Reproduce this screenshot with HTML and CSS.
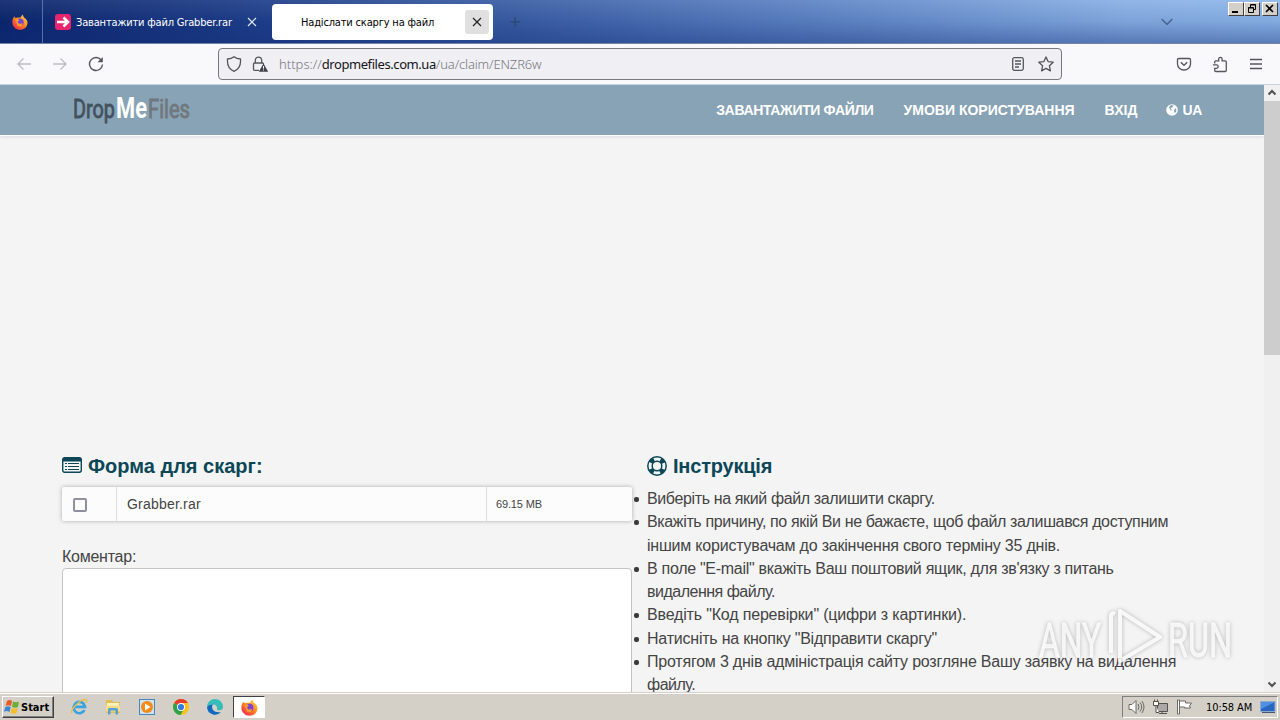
FILE: index.html
```html
<!DOCTYPE html>
<html lang="uk">
<head>
  <meta charset="UTF-8">
  <title>Надіслати скаргу на файл</title>
  <link rel="stylesheet" href="styles.css">
</head>
<body>
  <svg width="0" height="0" class="defs">
    <defs>
      <linearGradient id="fox" x1="1" y1="0" x2="0.2" y2="1">
        <stop offset="0" stop-color="#ffe14a"/>
        <stop offset="0.5" stop-color="#ff8a1f"/>
        <stop offset="1" stop-color="#f0264f"/>
      </linearGradient>
      <symbol id="firefox" viewBox="0 0 16 16">
        <path fill="url(#fox)" d="M1 4.500 2.200 2.500 3.500 4 6 3.500 8.500 3.500 10.500.5 12 3.500C14.500 5 15.800 7 15.500 9.500 15 13.300 12 15.800 8 15.800S.6 12.800.4 9C.3 7 .5 5.600 1 4.500z"/>
        <circle cx="8" cy="8.200" r="3.700" fill="#7a42d6"/>
        <path fill="#ff9a28" d="M3 5.500 6 5 7.200 6.300 5.500 8 7 9.800 10.500 9.500 9.500 12.500 5.500 12z"/>
      </symbol>
    </defs>
  </svg>

  <div class="tabbar">
    <div class="view-tab"><svg width="16" height="16"><use href="#firefox"/></svg></div>
    <div class="tab">
      <svg class="favicon" width="16" height="16" viewBox="0 0 16 16"><rect width="16" height="16" rx="3" fill="#e8246f"/><path d="M2 8h11M8.500 3.500 13 8l-4.500 4.500" fill="none" stroke="#fff" stroke-width="2.600"/></svg>
      <span class="tab-title t1">Завантажити файл Grabber.rar</span>
      <svg width="10" height="10" viewBox="0 0 10 10"><path d="M1 1l8 8M9 1 1 9" stroke="#dfe7f7" stroke-width="1.200"/></svg>
    </div>
    <div class="tab active">
      <span class="tab-title t2">Надіслати скаргу на файл</span>
      <span class="close-box"><svg width="10" height="10" viewBox="0 0 10 10"><path d="M1 1l8 8M9 1 1 9" stroke="#222" stroke-width="1.200"/></svg></span>
    </div>
    <svg class="plus" width="10" height="10" viewBox="0 0 10 10"><path d="M5 0v10M0 5h10" stroke="#2d4b70" stroke-width="1.300"/></svg>
    <svg class="chevron" width="12" height="8" viewBox="0 0 12 8"><path d="M.7 1 6 6.300 11.300 1" fill="none" stroke="#49668f" stroke-width="1.600"/></svg>
    <div class="win-buttons">
      <span class="win"><svg width="14" height="11"><path d="M3 9h6" stroke="#000" stroke-width="2"/></svg></span>
      <span class="win"><svg width="14" height="11" fill="none" stroke="#000"><path d="M5.500 5V1.500h5v5H9M5.500 2h5M3.500 4.500h5v5h-5zM3.500 5h5"/></svg></span>
      <span class="win last"><svg width="14" height="11"><path d="m3 2 7 7M10 2 3 9" stroke="#000" stroke-width="1.600"/></svg></span>
    </div>
  </div>

  <div class="toolbar">
    <div class="nav">
      <svg width="16" height="16" viewBox="0 0 16 16" fill="none" stroke="#bcbcc3" stroke-width="1.300"><path d="M15 8H2M7.500 2.500 2 8l5.500 5.500"/></svg>
      <svg width="16" height="16" viewBox="0 0 16 16" fill="none" stroke="#bcbcc3" stroke-width="1.300"><path d="M1 8h13M8.500 2.500 14 8l-5.500 5.500"/></svg>
      <svg width="16" height="16" viewBox="0 0 16 16"><path d="M13.500 4.500A6.500 6.500 0 1 0 14.500 8.500" fill="none" stroke="#55555e" stroke-width="1.400"/><path d="M14.800 1v5.300H9.500z" fill="#55555e"/></svg>
    </div>
    <div class="urlbar">
      <svg width="16" height="16" viewBox="0 0 16 16" fill="none" stroke="#55555e" stroke-width="1.300"><path d="M8 .8c2 1.600 4.200 2.100 6.500 2.200C15 9 12.800 13.500 8 15.300 3.200 13.500 1 9 1.500 3 3.800 2.900 6 2.400 8 .8z"/></svg>
      <svg class="lock" width="17" height="16" viewBox="0 0 17 16"><path d="M7 14.300H2.500q-1 0-1-1V8q0-1 1-1h8q1 0 1 1M3.300 7V4.300a3.200 3.200 0 0 1 6.400 0V7" fill="none" stroke="#55555e" stroke-width="1.300"/><path d="m11.500 7.500 4.700 8.200H6.800z" fill="#3f3f49"/><path d="M11.500 10v2.800M11.500 13.600v1" stroke="#fff" stroke-width="1.100"/></svg>
      <span class="url">https://<b>dropmefiles.com.ua</b><span class="path">/ua/claim/ENZR6w</span></span>
      <svg class="reader" width="14" height="16" viewBox="0 0 14 16" fill="none" stroke="#55555e" stroke-width="1.300"><rect x="1.700" y="1.700" width="10.600" height="12.600" rx="1.800"/><path d="M4 5h6M4 8h6M4 11h4"/></svg>
      <svg width="16" height="16" viewBox="0 0 16 16"><path d="m8 .9 2.100 4.700 5.100.6-3.800 3.500 1 5.200L8 12.400l-4.400 2.500 1-5.200L.8 6.200l5.100-.6z" fill="none" stroke="#55555e" stroke-width="1.300" stroke-linejoin="round"/></svg>
    </div>
    <div class="tools">
      <svg width="16" height="16" viewBox="0 0 16 16" fill="none" stroke="#55555e" stroke-width="1.300"><path d="M2.800 2.500h10.400q1.300 0 1.300 1.300V8a6.500 6 0 0 1-13 0V3.800q0-1.300 1.300-1.300z"/><path d="M4.800 6.300 8 9.300l3.200-3"/></svg>
      <svg width="16" height="17" viewBox="0 0 16 17" fill="none" stroke="#55555e" stroke-width="1.300"><path d="M2.700 7.500V5.800q0-1 1-1h3V3a1.700 1.700 0 0 1 3.400 0v1.800h3q1.200 0 1.200 1.200v8.300q0 1.200-1.200 1.200H3.900q-1.200 0-1.200-1.200v-2h1.800a1.500 1.500 0 0 0 0-3.400H1"/></svg>
      <svg class="burger" width="14" height="12" viewBox="0 0 14 12"><path d="M1 1.500h12M1 6h12M1 10.500h12" stroke="#55555e" stroke-width="1.300"/></svg>
    </div>
  </div>

  <div class="viewport">
    <div class="page">
      <header class="site-header">
        <svg class="logo" width="120" height="36" viewBox="0 0 120 36">
          <text x="1" y="26" font-size="25" fill="#43525f" stroke="#43525f" stroke-width=".8" textLength="42" lengthAdjust="spacingAndGlyphs">Drop</text>
          <text x="44" y="26" font-size="30" font-weight="bold" fill="#fff" textLength="31" lengthAdjust="spacingAndGlyphs">Me</text>
          <text x="76" y="26" font-size="25" fill="#71777c" stroke="#71777c" stroke-width=".8" textLength="42" lengthAdjust="spacingAndGlyphs">Files</text>
        </svg>
        <nav class="menu">
          <a class="m1">ЗАВАНТАЖИТИ ФАЙЛИ</a>
          <a class="m2">УМОВИ КОРИСТУВАННЯ</a>
          <a class="m3">ВХІД</a>
          <a class="m4"><svg width="12" height="12" viewBox="0 0 12 12"><circle cx="6" cy="6" r="5.800" fill="#fff"/><path d="m5 1 2.500.5L6 3.500l-1.500.7L6 6 4.500 6.500 3 3zM9 4l1.500 1.500L10 8 8.500 9 8 7z" fill="#87a3b5"/></svg> UA</a>
        </nav>
      </header>

      <main class="content">
        <section class="form">
          <h2>
            <svg class="list-icon" width="20" height="16" viewBox="0 0 20 16"><rect x=".7" y=".7" width="18.600" height="14.600" rx="2" fill="none" stroke="#0b4757" stroke-width="1.400"/><path d="M1 1h18v3.500H1z" fill="#0b4757"/><path d="M3 6.500h2M6 6.500h11M3 9.500h2M6 9.500h11M3 12.500h2M6 12.500h11" stroke="#0b4757"/></svg>
            <span>Форма для скарг:</span>
          </h2>
          <div class="file-row">
            <div class="cell-check"><span class="checkbox"></span></div>
            <div class="cell-name">Grabber.rar</div>
            <div class="cell-size">69.15 MB</div>
          </div>
          <div class="label">Коментар:</div>
          <div class="comment"></div>
        </section>
        <section class="help">
          <h2>
            <svg width="20" height="20" viewBox="0 0 20 20" fill="none" stroke="#0b4757"><circle cx="10" cy="10" r="9.200" stroke-width="1.500"/><circle cx="10" cy="10" r="4.800" stroke-width="1.500"/><circle cx="10" cy="10" r="7" stroke-width="4.200" stroke-dasharray="4.500 6.500" stroke-dashoffset="-3.250"/></svg>
            <span class="h-help">Інструкція</span>
          </h2>
          <ul>
            <li><span class="l1">Виберіть на який файл залишити скаргу.</span></li>
            <li><span class="l2">Вкажіть причину, по якій Ви не бажаєте, щоб файл залишався доступним</span><br><span class="l3">іншим користувачам до закінчення свого терміну 35 днів.</span></li>
            <li><span class="l4">В поле "E-mail" вкажіть Ваш поштовий ящик, для зв'язку з питань</span><br><span class="l5">видалення файлу.</span></li>
            <li><span class="l6">Введіть "Код перевірки" (цифри з картинки).</span></li>
            <li><span class="l7">Натисніть на кнопку "Відправити скаргу"</span></li>
            <li><span class="l8">Протягом 3 днів адміністрація сайту розгляне Вашу заявку на видалення</span><br><span class="l9">файлу.</span></li>
          </ul>
        </section>
      </main>
    </div>
    <div class="scrollbar">
      <svg width="16" height="16" viewBox="0 0 16 16"><path d="m4.500 9.500 3.500-3.500 3.500 3.500" fill="none" stroke="#505050" stroke-width="2"/></svg>
      <div class="thumb"></div>
      <svg class="down" width="16" height="16" viewBox="0 0 16 16"><path d="m4.500 6.500 3.500 3.500 3.500-3.500" fill="none" stroke="#505050" stroke-width="2"/></svg>
    </div>
  </div>

  <div class="taskbar">
    <div class="start">
      <svg width="17" height="16" viewBox="0 0 17 16"><path d="M3 2q3-2 5 0L7 7Q4 5.500 1.500 7z" fill="#e65c24"/><path d="M9 2.500q3 1.500 6 0L14 8q-3 1.500-6 0z" fill="#70ad36"/><path d="M1.300 8q3-1.500 5.400 0l-1.200 5q-3-2-5.500 0z" fill="#3b86d4"/><path d="M7.700 9q3 1.500 6 0l-1.200 5q-3 1.500-6 0z" fill="#f5bd27"/></svg>
      <span>Start</span>
    </div>
    <div class="launch">
      <svg width="18" height="18" viewBox="0 0 18 18" fill="none"><path d="M14.500 12A5.700 5.700 0 1 1 15 8.800H5" stroke="#37a4df" stroke-width="2.700"/><path d="M2 15.500C-.5 12 10 1.500 15.500 1.500q2 .5.500 3.500" stroke="#e8bd4a" stroke-width="1.300"/></svg>
      <svg width="18" height="18" viewBox="0 0 18 18"><path d="M2 2h6l1 2h7v11H2z" fill="#e2bd58"/><path d="M3 5h12v3H3z" fill="#fff3bd"/><path d="M2 7.500h14v6H2z" fill="#f4dc8c"/><path d="M4 16.500v-5Q4 10 5.500 10h7q1.500 0 1.500 1.500v5h-2.500v-4h-5v4z" fill="#53a3d2"/></svg>
      <svg width="18" height="18" viewBox="0 0 18 18"><rect x="1.500" y="1.500" width="15" height="15" fill="#cce3f5" stroke="#4a86ba"/><circle cx="9" cy="9" r="6" fill="#f38a16"/><path d="m7 5.500 5.500 3.500L7 12.500z" fill="#fff"/></svg>
      <svg width="18" height="18" viewBox="0 0 18 18"><circle cx="9" cy="9" r="8" fill="#fbc116"/><path d="M9 9 2.100 5A8 8 0 0 1 16 5H9z" fill="#e33b2e"/><path d="M2.100 5A8 8 0 0 0 8.500 17L12 11 9 9z" fill="#2da14c"/><circle cx="9" cy="9" r="4" fill="#fff"/><circle cx="9" cy="9" r="3.100" fill="#3479e0"/></svg>
      <svg width="18" height="18" viewBox="0 0 18 18"><path d="M1 9a8 8 0 0 1 16 0q0 3-3.500 3.200-3 0-2.500-2Q11 6.500 7 6.500 3 6.500 1 9z" fill="#37bdb8"/><path d="M1 9q2-3 6-2.500Q5.500 8 6.500 11q2 4 8.500 3a8 8 0 0 1-14-5z" fill="#1268bf"/></svg>
    </div>
    <div class="task-active"><svg width="17" height="17"><use href="#firefox"/></svg></div>
    <div class="tray">
      <svg width="17" height="16" viewBox="0 0 17 16" fill="none" stroke="#6d6a64"><path d="M1 5.500h3l4-4v13l-4-4H1z" fill="#fff"/><path d="M10 5q2 3 0 6M12 3.500q3.500 4.500 0 9M14 2q4 6 0 12"/></svg>
      <svg width="17" height="16" viewBox="0 0 17 16" stroke="#56534d"><path d="M5.500 4.500h10v8h-10z" fill="#aaa9a5"/><path d="M7 14.500h8M10 12.500v2"/><path d="M1.500 2.500h5v4h-5zM2.500.5v2M5.500.5v2M4 6.500v7h3" fill="#fff"/></svg>
      <svg width="17" height="16" viewBox="0 0 17 16" stroke="#6d6a64"><path d="M1.500 1v14h2V1zM3.500 2h6v2h6l-2 3 1 2h-6V8h-5z" fill="#fff"/></svg>
      <span class="clock">10:58 AM</span>
      <svg class="desktop" width="16" height="14" viewBox="0 0 16 14"><path d="M.5 1.500h14.500v10H.5z" fill="#2866c2" stroke="#8eaacb"/><path d="M1 2h14L1 9z" fill="#4e90e3"/><path d="M2 12.500h13" stroke="#435776"/></svg>
    </div>
  </div>

  <svg class="watermark" width="200" height="70" viewBox="0 0 200 70">
    <g font-size="49" fill="#fff" fill-opacity=".8" stroke="#fff" stroke-opacity=".6">
      <text x="4" y="54" textLength="62" lengthAdjust="spacingAndGlyphs">ANY</text>
      <text x="133" y="54" textLength="64" lengthAdjust="spacingAndGlyphs">RUN</text>
    </g>
    <path d="M76 50V13q0-4 4-2M85 8v50l40-24z" fill="none" stroke="#fff" stroke-width="4" stroke-opacity=".85" stroke-linejoin="round"/>
  </svg>
</body>
</html>
```
FILE: styles.css
```css
* {
  box-sizing: border-box;
}
body {
  margin: 0;
  width: 1280px;
  height: 720px;
  overflow: hidden;
  display: flex;
  flex-direction: column;
  font-family: "Liberation Sans", Arial, sans-serif;
  color: #444;
  white-space: nowrap;
}
svg {
  display: block;
  flex: none;
}
.defs {
  position: absolute;
}

/* browser chrome */
.tabbar {
  height: 44px;
  flex: none;
  display: flex;
  align-items: center;
  background: linear-gradient(rgba(255,255,255,0.08), rgba(20,45,120,0.1) 50%, rgba(20,45,120,0.42)), linear-gradient(90deg, #0a246a 0%, #1d3d88 20%, #3c60a6 42%, #6087c6 65%, #88b0e4 88%, #8eb8ea 100%);
  border-bottom: 1px solid #7384a5;
}
.view-tab {
  width: 43px;
  height: 43px;
  padding: 14px 0 0 12px;
  border-right: 1px solid #5970a5;
}
.tab {
  width: 225px;
  height: 36px;
  display: flex;
  align-items: center;
  padding-left: 12px;
  font-family: "DejaVu Sans Condensed", "DejaVu Sans", sans-serif;
  font-stretch: condensed;
  font-size: 11px;
  letter-spacing: -0.17px;
  color: #fff;
}
.tab-title {
  margin-left: 5px;
  padding-top: 2px;
}
.t1 {
  width: 171px;
}
.tab.active {
  width: 221px;
  margin-left: 4px;
  padding: 0 4px 0 24px;
  background: #fff;
  border-radius: 4px;
  color: #000;
}
.close-box {
  width: 24px;
  height: 24px;
  margin-left: auto;
  display: grid;
  place-items: center;
  border-radius: 3px;
  background: #e0e0e1;
}
.plus {
  margin-left: 17px;
}
.chevron {
  margin-left: auto;
}
.win-buttons {
  display: flex;
  align-self: flex-start;
  margin: 2px 2px 0 55px;
}
.win {
  width: 16px;
  height: 14px;
  overflow: hidden;
  background: #d4d0c8;
  border: 1px solid;
  border-color: #fff #404040 #404040 #fff;
}
.win.last {
  margin-left: 2px;
}
.toolbar {
  height: 41px;
  flex: none;
  display: flex;
  align-items: center;
  background: #f9f9fb;
  border-bottom: 1px solid #c6d3e1;
}
.nav {
  width: 218px;
  display: flex;
  gap: 20px;
  padding-left: 16px;
}
.urlbar {
  width: 844px;
  height: 32px;
  display: flex;
  align-items: center;
  padding: 0 7px;
  background: #f0f0f4;
  border: 1px solid #77777d;
  border-radius: 4px;
}
.lock {
  margin-left: 10px;
}
.url {
  margin-left: 10px;
  font-family: "Noto Sans", sans-serif;
  font-weight: 300;
  font-size: 13px;
  color: #77777f;
}
.url b {
  font-weight: 400;
  letter-spacing: -0.42px;
  color: #15141a;
}
.path {
  letter-spacing: -0.15px;
}
.reader {
  margin: 0 13px 0 auto;
}
.tools {
  margin-left: auto;
  padding-right: 17px;
  display: flex;
  align-items: center;
  gap: 20px;
}
.burger {
  margin-left: 1px;
}

/* web page */
.viewport {
  flex: 1;
  min-height: 0;
  display: flex;
}
.page {
  width: 1264px;
  overflow: hidden;
  background: #f4f4f4;
}
.site-header {
  height: 50px;
  display: flex;
  align-items: center;
  justify-content: space-between;
  padding: 0 62px 0 72px;
  background: #87a3b5;
  box-shadow: 0 1px 0 #fff, 0 2px 3px #dcdce8;
}
.logo {
  overflow: visible;
  font-family: "Roboto", sans-serif;
}
.menu {
  display: flex;
  gap: 30px;
  font-size: 14px;
  font-weight: bold;
  color: #fff;
}
.m1 {
  letter-spacing: -0.34px;
}
.m4 {
  display: flex;
  align-items: center;
  gap: 4px;
  margin-left: -1px;
  letter-spacing: -0.3px;
}
.content {
  display: flex;
  gap: 15px;
  padding: 318px 0 0 62px;
}
.form {
  width: 570px;
}
h2 {
  height: 26px;
  margin: 0;
  display: flex;
  align-items: center;
  gap: 6px;
  font-size: 20px;
  color: #0b4757;
}
.list-icon {
  margin-bottom: 2px;
}
.h-help {
  letter-spacing: -0.2px;
}
.file-row {
  height: 34px;
  margin-top: 8px;
  display: flex;
  background: #fcfcfc;
  border-radius: 2px;
  box-shadow: 0 0 4px #aaa;
}
.file-row > div {
  display: flex;
  align-items: center;
}
.file-row .cell-check {
  width: 55px;
  padding: 2px 0 0 11px;
  border-right: 1px solid #ddd;
}
.checkbox {
  width: 14px;
  height: 14px;
  border: 2px solid #8f8f9d;
  border-radius: 2px;
  background: #fff;
}
.cell-name {
  width: 370px;
  padding-left: 10px;
  border-right: 1px solid #ddd;
  font-size: 14px;
  letter-spacing: 0.2px;
}
.cell-size {
  padding-left: 9px;
  font-size: 11px;
  letter-spacing: -0.15px;
}
.label {
  margin-top: 24px;
  height: 23px;
  line-height: 23px;
  font-size: 16px;
  letter-spacing: -0.25px;
}
.comment {
  height: 200px;
  background: #fff;
  border: 1px solid #c4c4c4;
  border-radius: 4px;
}
ul {
  margin: 8px 0 0;
  padding: 0;
  list-style: none;
  font-size: 16px;
  line-height: 23.25px;
}
li::before {
  content: "";
  display: inline-block;
  width: 5px;
  height: 5px;
  margin: 0 8px 0 -13px;
  vertical-align: 2px;
  border-radius: 2px;
  background: #3a3a3a;
}
.l1 { letter-spacing: -0.37px; }
.l2 { letter-spacing: -0.36px; }
.l3 { letter-spacing: -0.21px; }
.l4 { letter-spacing: -0.29px; }
.l5 { letter-spacing: -0.5px; }
.l6 { letter-spacing: -0.17px; }
.l7 { letter-spacing: -0.22px; }
.l8 { letter-spacing: -0.21px; }
.l9 { letter-spacing: -0.5px; }

.scrollbar {
  width: 16px;
  display: flex;
  flex-direction: column;
  background: #f0f0f0;
}
.thumb {
  height: 254px;
  background: #cdcdcd;
}
.down {
  margin-top: auto;
}

/* windows taskbar */
.taskbar {
  height: 28px;
  flex: none;
  display: flex;
  align-items: center;
  padding: 1px 2px 0;
  background: #d4d0c8;
  border-top: 1px solid #d4d0c8;
  box-shadow: inset 0 1px 0 #fff;
}
.start {
  width: 52px;
  height: 22px;
  display: flex;
  align-items: center;
  padding-left: 1px;
  border: 1px solid;
  border-color: #fff #404040 #404040 #fff;
  box-shadow: inset -1px -1px 0 #808080;
  font: bold 11px "DejaVu Sans Condensed", "DejaVu Sans", sans-serif;
  font-stretch: condensed;
  color: #000;
}
.launch {
  display: flex;
  gap: 16px;
  margin-left: 16px;
}
.task-active {
  width: 32px;
  height: 22px;
  margin-left: 9px;
  display: grid;
  place-items: center;
  background: #fff;
  border: 1px solid;
  border-color: #404040 #fff #fff #404040;
}
.tray {
  width: 156px;
  height: 22px;
  margin-left: auto;
  display: flex;
  align-items: center;
  gap: 7px;
  padding-left: 5px;
  border: 1px solid;
  border-color: #808080 #fff #fff #808080;
}
.clock {
  width: 47px;
  margin-left: 6px;
  font: 11px "DejaVu Sans Condensed", "DejaVu Sans", sans-serif;
  font-stretch: condensed;
  letter-spacing: -0.1px;
  color: #000;
}
.watermark {
  position: absolute;
  left: 1035px;
  top: 603px;
  overflow: visible;
  font-family: "Roboto", sans-serif;
  filter: drop-shadow(0 0 2px rgba(0,0,0,0.3));
}
```
